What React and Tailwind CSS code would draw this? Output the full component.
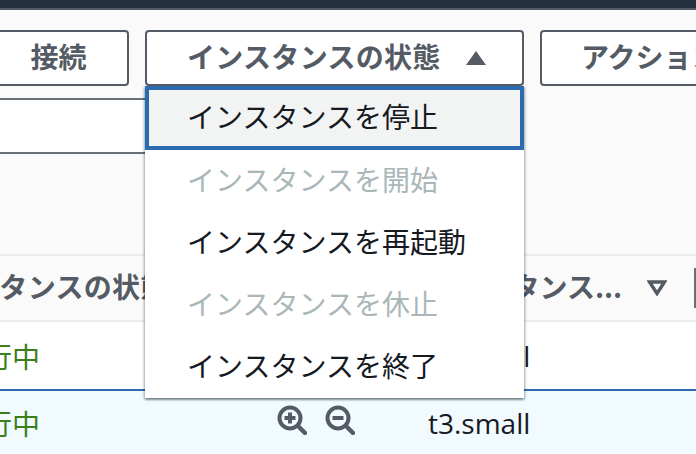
const cjk = { fontFamily: '"Noto Sans CJK JP", "Noto Sans", sans-serif' }

const items = [
  { label: 'インスタンスを停止', focused: true },
  { label: 'インスタンスを開始', disabled: true },
  { label: 'インスタンスを再起動' },
  { label: 'インスタンスを休止', disabled: true },
  { label: 'インスタンスを終了' },
]

function ZoomIcon({ minus }) {
  return (
    <svg width="30" height="30" viewBox="0 0 30 30" fill="none" stroke="#545b64">
      <circle cx="13" cy="13" r="10.5" strokeWidth="4" />
      <path d="M21 21l7 7" strokeWidth="4.4" strokeLinecap="round" />
      <path d="M7.5 13h11" strokeWidth="4" />
      {!minus && <path d="M13 7.5v11" strokeWidth="4" />}
    </svg>
  )
}

function Row({ className, icons, size }) {
  return (
    <div className={`flex items-center -ml-[82px] ${className}`}>
      <div className="w-[510px] shrink-0 flex items-center">
        <span className="ml-[38px] w-[321px] text-[28px] text-[#3b7e1a]">実行中</span>
        {icons && (
          <div className="flex gap-[18px] mt-[-6px]">
            <ZoomIcon />
            <ZoomIcon minus />
          </div>
        )}
      </div>
      <span className="text-[28px] text-[#16191f]" style={{ fontFamily: '"Open Sans", sans-serif' }}>{size}</span>
    </div>
  )
}

export default function App() {
  return (
    <div className="relative w-[696px] h-[454px] overflow-hidden bg-[#fafafa]" style={cjk}>
      <div className="h-2 bg-[#232f3e]" />
      <div className="h-0.5 bg-[#545b64]" />

      <div className="flex gap-4 mt-5 -ml-3 h-[56px]">
        <button className="w-[141px] shrink-0 pb-1 bg-white border-2 border-[#545b64] rounded-[4px] text-[28px] font-bold text-[#545b64]">接続</button>
        <button className="w-[379px] shrink-0 pb-1 pl-[40px] bg-white border-2 border-[#545b64] rounded-[4px] font-bold text-[#545b64] flex items-center gap-[24px]">
          <span className="text-[28px] tracking-[0.3px] leading-none">インスタンスの状態</span>
          <svg className="mt-1" width="22" height="16" viewBox="0 0 22 16"><path d="M11 1L21 15H1z" fill="#545b64" /></svg>
        </button>
        <button className="w-[200px] shrink-0 pb-1 bg-white border-2 border-[#545b64] rounded-[4px] text-[28px] font-bold text-[#545b64] text-left pl-[39px] whitespace-nowrap overflow-hidden">アクション</button>
      </div>

      <div className="w-[200px] h-[56px] mt-[12px] bg-white border-y-2 border-[#687078]" />

      <div className="mt-[100px] h-[68px] border-y-2 border-[#eaeded] flex items-center -ml-[85px] overflow-hidden">
        <span className="w-[513px] shrink-0 pb-1 text-[28px] tracking-[0.3px] font-bold text-[#545b64] whitespace-nowrap">インスタンスの状態</span>
        <span className="w-[219px] shrink-0 pb-1 text-[28px] font-bold text-[#545b64] whitespace-nowrap">インスタンス...</span>
        <svg className="shrink-0 mr-[27px]" width="20" height="16" viewBox="0 0 20 16" fill="none"><path d="M2.5 2h15L10 13.5z" stroke="#545b64" strokeWidth="3.4" /></svg>
        <div className="w-0.5 h-10 shrink-0 bg-[#687078]" />
      </div>

      <Row className="h-[67px] bg-white" size="t3.small" />
      <div className="h-0.5 bg-[#2b6cb0]" />
      <Row className="h-[63px] bg-[#f1faff]" size="t3.small" icons />

      <div className="absolute left-[145px] top-[86px] w-[379px] bg-white shadow-[0_2px_2px_0_rgba(0,28,36,0.4),2px_1px_2px_0_rgba(0,28,36,0.15),-2px_1px_2px_0_rgba(0,28,36,0.15)]">
        {items.map(item => (
          <div
            key={item.label}
            className={`flex items-center pb-1 text-[28px] ${item.focused ? 'h-[64px] border-4 border-[#2b6cb0] bg-[#f2f3f3] pl-[38px]' : 'h-[62px] pl-[42px]'} ${item.disabled ? 'text-[#aab7b8]' : 'text-[#16191f]'}`}
          >
            {item.label}
          </div>
        ))}
      </div>
    </div>
  )
}
